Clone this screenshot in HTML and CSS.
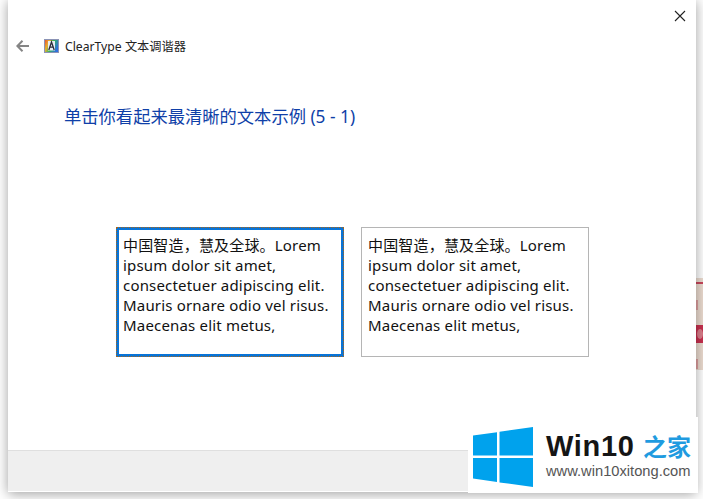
FILE: index.html
```html
<!DOCTYPE html>
<html lang="zh-CN">
<head>
    <meta charset="UTF-8">
    <meta name="viewport" content="width=device-width, initial-scale=1.0">
    <title>ClearType 文本调谐器</title>
    <link rel="stylesheet" href="styles.css">
</head>
<body>
    <!-- bit of desktop showing behind the window -->
    <div class="desktop-scrap">
        <div class="scrap-line"></div>
        <div class="scrap-mark"></div>
        <div class="scrap-blob"><div class="scrap-dot"></div></div>
        <div class="scrap-mark"></div>
    </div>

    <div class="window">
        <div class="close-row">
            <svg class="close-icon" width="12" height="12" viewBox="0 0 12 12">
                <path d="M1 1L11 11M11 1L1 11" stroke="#222" stroke-width="1.1" fill="none"/>
            </svg>
        </div>

        <div class="title-row">
            <svg class="back-icon" width="13" height="12" viewBox="0 0 13 12">
                <path d="M6.5 0.7L1.3 6L6.5 11.3M1.3 6H13" stroke="#858585" stroke-width="2" fill="none"/>
            </svg>
            <svg class="app-icon" width="15" height="14" viewBox="0 0 15 14">
                <defs>
                    <linearGradient id="rainbow" x1="0" y1="0" x2="1" y2="0.4">
                        <stop offset="0" stop-color="#e8352c"/>
                        <stop offset="0.35" stop-color="#e6b030"/>
                        <stop offset="0.6" stop-color="#35b55a"/>
                        <stop offset="1" stop-color="#2f6fe0"/>
                    </linearGradient>
                </defs>
                <rect x="0" y="0" width="15" height="14" fill="url(#rainbow)"/>
                <rect x="0.5" y="0.5" width="14" height="13" fill="none" stroke="#8b93b5"/>
                <rect x="4" y="2" width="7" height="9.5" fill="#e8edf2"/>
                <path d="M4.8 11L7.5 3L10.2 11M5.8 8.2H9.2" stroke="#2b2b3a" stroke-width="1.3" fill="none"/>
            </svg>
            <span class="title-text">ClearType 文本调谐器</span>
        </div>

        <h1 class="heading">单击你看起来最清晰的文本示例 (5 - 1)</h1>

        <div class="samples">
            <div class="sample sample-selected">中国智造，慧及全球。Lorem ipsum dolor sit amet, consectetuer adipiscing elit. Mauris ornare odio vel risus. Maecenas elit metus,</div>
            <div class="sample">中国智造，慧及全球。Lorem ipsum dolor sit amet, consectetuer adipiscing elit. Mauris ornare odio vel risus. Maecenas elit metus,</div>
        </div>

        <div class="footer"></div>
    </div>

    <div class="watermark">
        <svg class="win-logo" width="60" height="60" viewBox="0 0 60 60">
            <path d="M0 8.5L24 5.2V28.5H0ZM26.5 4.8L60 0V28.5H26.5ZM0 31H24V55L0 51.5ZM26.5 31H60V60L26.5 55.4Z" fill="#00a2ed"/>
        </svg>
        <div class="brand">
            <div class="brand-name">Win10<span class="brand-cn">之家</span></div>
            <div class="brand-url">www.win10xitong.com</div>
        </div>
    </div>
</body>
</html>
```

FILE: styles.css
```css
html, body {
    margin: 0;
    height: 100%;
}
body {
    position: relative;
    width: 703px;
    height: 499px;
    overflow: hidden;
    background-color: #fff;
    font-family: "Noto Sans", "Noto Sans CJK SC", sans-serif;
}
.desktop-scrap {
    position: absolute;
    left: 690px;
    top: 278px;
    width: 13px;
    height: 92px;
    box-sizing: border-box;
    padding-top: 4px;
    background-color: #ecdcd0;
}
.scrap-line {
    height: 2px;
    background-color: #c9475c;
}
.scrap-mark {
    margin: 16px 5px 0 6px;
    height: 10px;
    background-color: #dfa0a0;
}
.scrap-blob {
    display: flex;
    justify-content: flex-end;
    align-items: center;
    margin-top: 15px;
    height: 18px;
    background-color: #c9304f;
}
.scrap-dot {
    width: 6px;
    height: 10px;
    border-radius: 50%;
    background-color: #dc7f8c;
}
.window {
    position: absolute;
    left: 8px;
    top: -1px;
    width: 688px;
    height: 493px;
    display: flex;
    flex-direction: column;
    background-color: #fff;
    box-shadow: 0 2px 12px rgba(0,0,0,0.38);
}
.close-row {
    display: flex;
    justify-content: flex-end;
    padding: 11px 10px 0 0;
    height: 21px;
}
.close-icon {
    display: block;
}
.title-row {
    display: flex;
    align-items: center;
    height: 16px;
    margin-top: 7px;
    padding-left: 8px;
}
.back-icon {
    margin-right: 15px;
}
.app-icon {
    margin-right: 6px;
}
.title-text {
    font-size: 12.2px;
    color: #222;
}
.heading {
    margin: 50px 0 0 56px;
    font-size: 17.3px;
    line-height: 26px;
    font-weight: normal;
    color: #0f3fa8;
}
.samples {
    display: flex;
    gap: 17px;
    margin: 97px 0 0 108px;
}
.sample {
    box-sizing: border-box;
    width: 228px;
    height: 130px;
    padding: 7px 6px;
    border: 1px solid #b5b5b5;
    font-size: 15px;
    line-height: 20px;
    letter-spacing: 0.18px;
    color: #111;
}
/* focus look: solid blue edge with the dotted rectangle on its outer pixel */
.sample-selected {
    width: 226px;
    height: 128px;
    margin: 1px;
    padding: 5px 4px;
    border: 2px solid #0a74d6;
    box-shadow: 0 0 0 1px #0a74d6;
    outline: 1px dotted #a8651a;
}
.footer {
    margin-top: auto;
    height: 40px;
    margin-bottom: 1px;
    background-color: #efefef;
    border-top: 1px solid #dfdfdf;
}
.watermark {
    position: absolute;
    left: 468px;
    top: 417px;
    width: 230px;
    height: 76px;
    display: flex;
    align-items: center;
    box-sizing: border-box;
    padding-left: 5px;
    background-color: #fff;
}
.win-logo {
    display: block;
    margin: 4px 13px 0 0;
}
.brand-name {
    display: flex;
    align-items: center;
    justify-content: space-between;
    width: 145px;
    font-family: "Liberation Sans", sans-serif;
    font-size: 29px;
    line-height: 32px;
    letter-spacing: 0.7px;
    font-weight: bold;
    color: #151515;
}
.brand-cn {
    font-family: "Noto Sans CJK SC", sans-serif;
    font-size: 24px;
    letter-spacing: 0;
    color: #1f9be0;
}
.brand-url {
    font-family: "Liberation Sans", sans-serif;
    font-size: 14.7px;
    line-height: 18px;
    white-space: nowrap;
    color: #555;
}
```
